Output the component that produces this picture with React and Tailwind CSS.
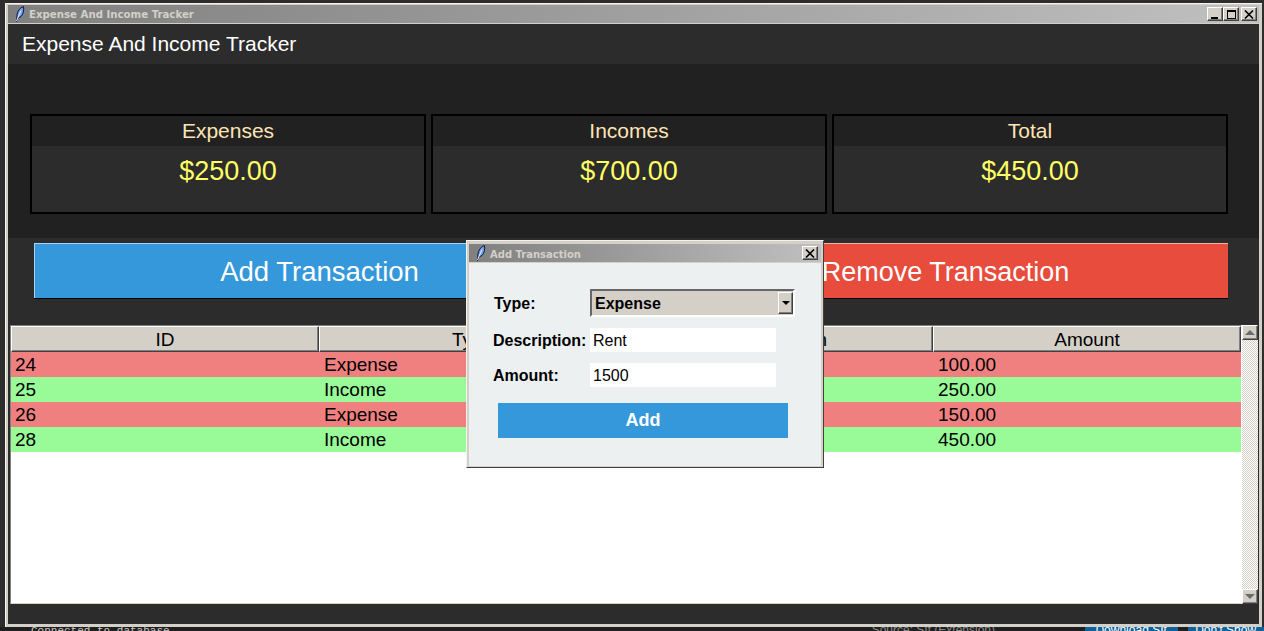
import React from "react";

const stats = [
  { label: "Expenses", value: "$250.00" },
  { label: "Incomes", value: "$700.00" },
  { label: "Total", value: "$450.00" },
];

const rows = [
  { id: 24, type: "Expense", description: "Groceries", amount: "100.00" },
  { id: 25, type: "Income", description: "Freelance", amount: "250.00" },
  { id: 26, type: "Expense", description: "Utilities", amount: "150.00" },
  { id: 28, type: "Income", description: "Salary", amount: "450.00" },
];

const raised =
  "border border-t-white border-l-white border-r-[#404040] border-b-[#404040] bg-[#d4d0c8] shadow-[inset_-1px_-1px_0_#808080]";

function Feather() {
  return (
    <svg width="10" height="16" viewBox="0 0 10 16" className="shrink-0">
      <path d="M1.5 15.5 L2 9 C2.5 5 5 1.5 8.5 0.5 C9 4 8.5 8 6 10.5 L3 12 Z" fill="#6f9fe8" stroke="#0c1840" strokeWidth="1" />
      <path d="M1.5 15 L6 4.5" stroke="#eef4ff" strokeWidth="1" fill="none" />
    </svg>
  );
}

function WinButton({ children }) {
  return (
    <div className={`w-4 h-[14px] flex items-center justify-center ${raised}`}>
      {children}
    </div>
  );
}

function CloseIcon() {
  return (
    <svg width="10" height="9" viewBox="0 0 10 9">
      <path d="M1 0.5 L9 8.5 M9 0.5 L1 8.5" stroke="#000" strokeWidth="1.6" />
    </svg>
  );
}

function TitleBar({ title, className, children }) {
  return (
    <div className={`flex items-center bg-gradient-to-r from-[#808080] to-[#c0c0c0] font-['DejaVu_Sans',sans-serif] font-bold text-[#d4d0c8] ${className}`}>
      <Feather />
      <span className="ml-[4px] pt-[2px] flex-1 whitespace-nowrap">{title}</span>
      {children}
    </div>
  );
}

function StatCard({ label, value }) {
  return (
    <div className="w-[396px] h-[100px] border-2 border-black bg-[#2c2c2c]">
      <div className="h-[30px] bg-[#212121] flex items-center justify-center text-[21px] text-[#ffe4b5]">
        {label}
      </div>
      <div className="pt-[7px] text-center text-[27px] leading-[36px] text-[#ffff66]">
        {value}
      </div>
    </div>
  );
}

function ScrollArrow({ up }) {
  return (
    <div className={`w-[16px] h-[15px] flex items-center justify-center ${raised}`}>
      <div
        className={
          up
            ? "w-0 h-0 border-x-[5px] border-x-transparent border-b-[5px] border-b-[#6b6b6b]"
            : "w-0 h-0 border-x-[5px] border-x-transparent border-t-[5px] border-t-[#6b6b6b]"
        }
      />
    </div>
  );
}

function Table() {
  const head = ["ID", "Type", "Description", "Amount"];
  return (
    <div className="flex h-[279px] ml-[2px]">
      <div className="w-[1231px] border-t border-l border-[#808080] border-b border-b-[#d4d0c8] bg-white">
        <div className="grid grid-cols-[308px_307px_307px_308px] h-[26px]">
          {head.map((h) => (
            <div key={h} className={`flex items-center justify-center pt-[2px] text-[19px] leading-[22px] text-black ${raised}`}>
              {h}
            </div>
          ))}
        </div>
        {rows.map((r) => (
          <div
            key={r.id}
            className={`grid grid-cols-[308px_307px_307px_308px] h-[25px] items-center text-[19px] leading-[24px] text-black ${
              r.type === "Expense" ? "bg-[#f08080]" : "bg-[#98fb98]"
            }`}
          >
            <span className="pl-[4px]">{r.id}</span>
            <span className="pl-[5px]">{r.type}</span>
            <span className="pl-[5px]">{r.description}</span>
            <span className="pl-[5px]">{r.amount}</span>
          </div>
        ))}
      </div>
      <div className="w-[17px] border-l border-white flex flex-col justify-between bg-[repeating-conic-gradient(#d4d0c8_0_25%,#ffffff_0_50%)] bg-[length:2px_2px]">
        <ScrollArrow up />
        <ScrollArrow />
      </div>
    </div>
  );
}

function AddDialog() {
  return (
    <div className="absolute left-[466px] top-[240px] w-[358px] h-[228px] border border-[#f4f2ec] border-r-[#404040] border-b-[#404040] bg-[#d4d0c8] p-[2px] pt-[3px] font-['Liberation_Sans',sans-serif]">
      <TitleBar title="Add Transaction" className="h-[18px] pl-[7px] pr-[3px] text-[10px]">
        <WinButton>
          <CloseIcon />
        </WinButton>
      </TitleBar>
      <div className="h-[203px] mt-px bg-[#ecf0f1] pt-[26px] text-[16px] text-black">
        <div className="flex items-center h-[28px]">
          <span className="ml-[25px] w-[96px] font-bold leading-[24px] pt-px">Type:</span>
          <div className="w-[205px] h-[28px] flex items-center justify-between border-2 border-[#666666] border-r-white border-b-white bg-[#d4d0c8] pl-[3px]">
            <span className="font-bold leading-[24px] pt-px">Expense</span>
            <div className={`w-[15px] h-[22px] flex items-center justify-center ${raised}`}>
              <div className="w-0 h-0 border-x-[4px] border-x-transparent border-t-[4px] border-t-black" />
            </div>
          </div>
        </div>
        <div className="flex items-center h-[24px] mt-[11px]">
          <span className="ml-[24px] w-[97px] font-bold whitespace-nowrap leading-[24px] pt-px">Description:</span>
          <div className="w-[186px] h-[24px] bg-white pl-[3px] leading-[25px]">Rent</div>
        </div>
        <div className="flex items-center h-[24px] mt-[11px]">
          <span className="ml-[24px] w-[97px] font-bold leading-[24px] pt-px">Amount:</span>
          <div className="w-[186px] h-[24px] bg-white pl-[3px] leading-[25px]">1500</div>
        </div>
        <div className="ml-[29px] mt-[16px] w-[290px] h-[35px] bg-[#3498db] flex items-center justify-center text-[18px] font-bold text-white">
          Add
        </div>
      </div>
    </div>
  );
}

export default function App() {
  return (
    <div className="relative w-[1264px] h-[631px] overflow-hidden bg-[#2d2d2d] pt-[3px] font-['Liberation_Sans',sans-serif]">
      <div className="ml-[5px] w-[1257px] h-[624px] border-t border-l border-[#f4f2ec] bg-[#d4d0c8] pl-[2px] pr-[3px] pt-px">
        <TitleBar title="Expense And Income Tracker" className="h-[18px] pl-[7px] pr-[2px] text-[10.2px]">
          <div className="flex">
            <WinButton>
              <div className="w-[7px] h-[2px] bg-black mt-[7px] mr-[2px]" />
            </WinButton>
            <WinButton>
              <div className="w-[9px] h-[9px] border border-black border-t-2" />
            </WinButton>
            <div className="w-[2px]" />
            <WinButton>
              <CloseIcon />
            </WinButton>
          </div>
        </TitleBar>
        <div className="mt-px h-[600px] bg-[#2c2c2c]">
          <div className="h-[40px] flex items-center pl-[14px] text-[21px] text-white">
            Expense And Income Tracker
          </div>
          <div className="h-[174px] bg-[#212121] pt-[50px] pl-[22px] flex gap-[5px]">
            {stats.map((s) => (
              <StatCard key={s.label} {...s} />
            ))}
          </div>
          <div className="flex justify-between ml-[26px] w-[1194px] mt-[5px] h-[55px] text-white">
            <div className="w-[570px] pt-px flex items-center justify-center text-[27.5px] bg-[#3498db] border-t border-l border-[#a8d4f0] shadow-[0_1px_0_#000]">
              Add Transaction
            </div>
            <div className="w-[566px] pt-[3px] flex items-center justify-center text-[27px] bg-[#e74c3c] border-t border-l border-[#f5b0a8] shadow-[0_1px_0_#000]">
              Remove Transaction
            </div>
          </div>
          <div className="mt-[27px]">
            <Table />
          </div>
        </div>
      </div>
      <div className="flex h-[4px] overflow-hidden bg-[#1f1f1f] text-[#c8c8c8] text-[12px]">
        <span className="ml-[31px] -mt-[2px] font-['Liberation_Mono',monospace] text-[11px] leading-[12px]">Connected to database</span>
        <span className="ml-[702px] -mt-[3px] text-[#8a8a8a] leading-[12px] w-[213px]">Source: SIt (Extension)</span>
        <span className="w-[93px] bg-[#0e639c] text-white text-center -mt-[3px] leading-[12px]">Download SIt</span>
        <span className="ml-[10px] w-[76px] bg-[#0e639c] text-white text-center -mt-[3px] leading-[12px]">Don't Show</span>
      </div>
      <AddDialog />
    </div>
  );
}
